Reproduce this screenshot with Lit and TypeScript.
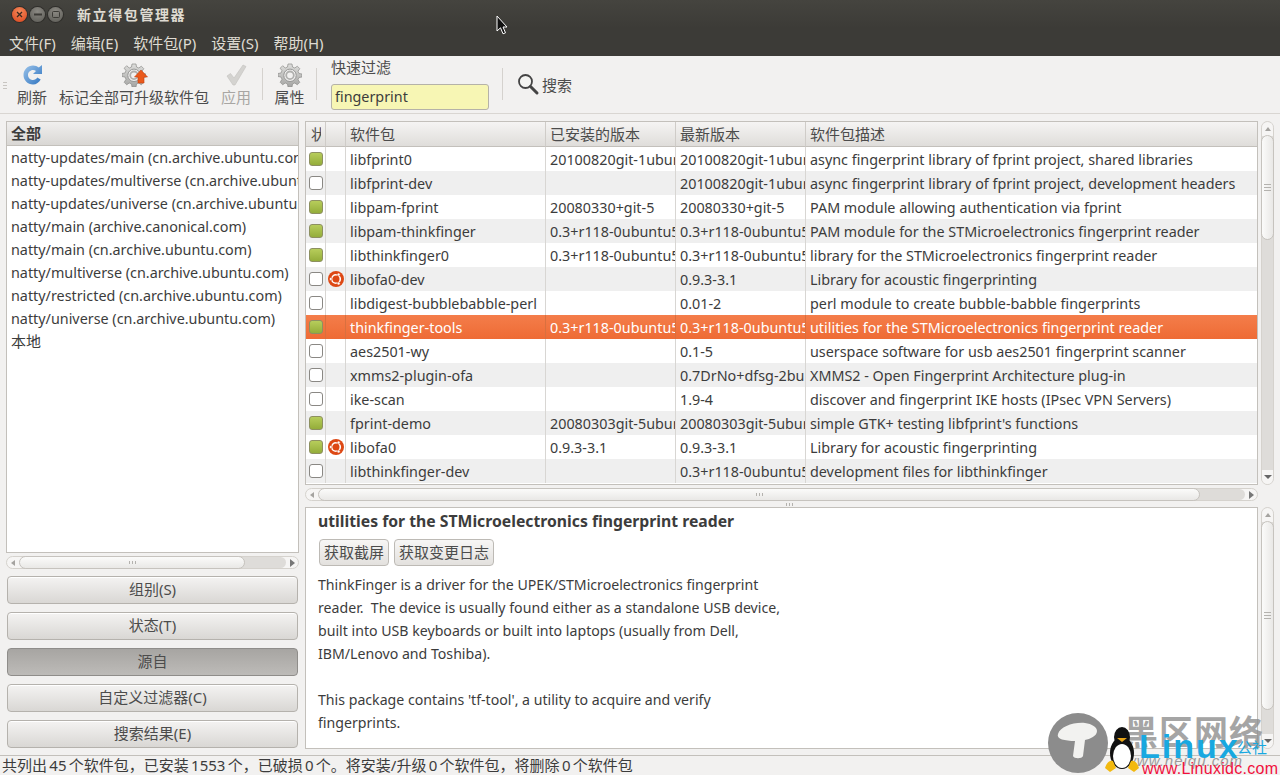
import { LitElement, html, css, svg } from "lit";
import { customElement } from "lit/decorators.js";

type Row = { c: boolean; u?: boolean; n: string; i: string; l: string; d: string; sel?: boolean };
const rows: Row[] = [
  { c: true, n: "libfprint0", i: "20100820git-1ubuntu1", l: "20100820git-1ubuntu1", d: "async fingerprint library of fprint project, shared libraries" },
  { c: false, n: "libfprint-dev", i: "", l: "20100820git-1ubuntu1", d: "async fingerprint library of fprint project, development headers" },
  { c: true, n: "libpam-fprint", i: "20080330+git-5", l: "20080330+git-5", d: "PAM module allowing authentication via fprint" },
  { c: true, n: "libpam-thinkfinger", i: "0.3+r118-0ubuntu5", l: "0.3+r118-0ubuntu5", d: "PAM module for the STMicroelectronics fingerprint reader" },
  { c: true, n: "libthinkfinger0", i: "0.3+r118-0ubuntu5", l: "0.3+r118-0ubuntu5", d: "library for the STMicroelectronics fingerprint reader" },
  { c: false, u: true, n: "libofa0-dev", i: "", l: "0.9.3-3.1", d: "Library for acoustic fingerprinting" },
  { c: false, n: "libdigest-bubblebabble-perl", i: "", l: "0.01-2", d: "perl module to create bubble-babble fingerprints" },
  { c: true, n: "thinkfinger-tools", i: "0.3+r118-0ubuntu5", l: "0.3+r118-0ubuntu5", d: "utilities for the STMicroelectronics fingerprint reader", sel: true },
  { c: false, n: "aes2501-wy", i: "", l: "0.1-5", d: "userspace software for usb aes2501 fingerprint scanner" },
  { c: false, n: "xmms2-plugin-ofa", i: "", l: "0.7DrNo+dfsg-2build1", d: "XMMS2 - Open Fingerprint Architecture plug-in" },
  { c: false, n: "ike-scan", i: "", l: "1.9-4", d: "discover and fingerprint IKE hosts (IPsec VPN Servers)" },
  { c: true, n: "fprint-demo", i: "20080303git-5ubuntu1", l: "20080303git-5ubuntu1", d: "simple GTK+ testing libfprint's functions" },
  { c: true, u: true, n: "libofa0", i: "0.9.3-3.1", l: "0.9.3-3.1", d: "Library for acoustic fingerprinting" },
  { c: false, n: "libthinkfinger-dev", i: "", l: "0.3+r118-0ubuntu5", d: "development files for libthinkfinger" },
];

const origins = [
  "natty-updates/main (cn.archive.ubuntu.com)",
  "natty-updates/multiverse (cn.archive.ubuntu.com)",
  "natty-updates/universe (cn.archive.ubuntu.com)",
  "natty/main (archive.canonical.com)",
  "natty/main (cn.archive.ubuntu.com)",
  "natty/multiverse (cn.archive.ubuntu.com)",
  "natty/restricted (cn.archive.ubuntu.com)",
  "natty/universe (cn.archive.ubuntu.com)",
];

const gear = () => svg`<svg width="24" height="24" viewBox="0 0 24 24">
  <defs><linearGradient id="g" x1="0" y1="0" x2="0" y2="1"><stop offset="0" stop-color="#dededc"/><stop offset="1" stop-color="#a5a5a3"/></linearGradient></defs>
  <g fill="url(#g)" stroke="#8c8c8a" stroke-width=".7">
    <path d="M10 1h4l.5 3 2.300 1 2.500-1.800 2.500 2.500L20 8.200l1 2.300 3 .5v3l-3 .5-1 2.300 1.800 2.500-2.500 2.500-2.500-1.800-2.300 1-.5 3h-4l-.5-3-2.300-1-2.500 1.800-2.500-2.500L4 16.300l-1-2.300-3-.5v-3l3-.5 1-2.300-1.800-2.500 2.500-2.500L7.200 5l2.300-1z"/>
  </g>
  <circle cx="12" cy="12.300" r="6.200" fill="#f2f1f0" stroke="#8f8f8d" stroke-width=".9"/>
  <circle cx="12" cy="12.300" r="3.800" fill="none" stroke="#b0b0ae" stroke-width="1.800"/>
</svg>`;

@customElement("app-root")
export class AppRoot extends LitElement {
  static styles = css`
    :host { display: block; width: 1280px; height: 775px; overflow: hidden; position: relative; font-family: "Noto Sans", "Noto Sans CJK SC", sans-serif; font-size: 14.35px; color: #3c3c3c; background: #f2f1f0; }
    .win { display: flex; flex-direction: column; height: 775px; }
    .zh { font-size: 15px; }
    .title { height: 28px; background: linear-gradient(#45443f, #3c3b37); display: flex; align-items: center; padding-left: 12px; color: #dfdbd2; font-weight: 700; font-size: 14px; flex: none; }
    .wbtns { display: flex; gap: 3px; margin-right: 14px; align-items: center; }
    .wbtn { width: 15px; height: 15px; border-radius: 50%; display: flex; align-items: center; justify-content: center; background: radial-gradient(circle at 50% 30%, #8b8983, #5b5a55); box-shadow: 0 0 0 1px #2f2e2b; }
    .wbtn.close { background: radial-gradient(circle at 50% 30%, #f58a5b, #d9431b); }
    .title span.t { letter-spacing: 1.6px; }
    .menu { height: 28px; background: #3c3b37; display: flex; align-items: center; color: #dfdbd2; padding-left: 9px; gap: 15px; font-size: 15px; flex: none; }
    .toolbar { height: 58px; flex: none; display: flex; background: #f2f1f0; border-bottom: 1px solid #d9d6d2; box-sizing: border-box; padding-left: 3px; }
    .grip { width: 4px; height: 7px; margin-top: 26px; background: repeating-linear-gradient(0deg, #c8c5c1 0 1px, transparent 1px 3px); flex: none; }
    .tool { display: flex; flex-direction: column; align-items: center; padding-top: 6px; gap: 1px; font-size: 15px; line-height: 18px; color: #4c4c4c; height: 50px; box-sizing: border-box; flex: none; }
    .tool .ic { height: 26px; display: flex; align-items: center; justify-content: center; position: relative; }
    .tool .up { position: absolute; left: 11px; top: 7px; }
    .tool.dis { color: #a8a6a3; }
    .tool.refresh { width: 46px; margin-left: 2px; }
    .tool.mark { width: 158px; }
    .tool.apply { width: 46px; }
    .tool.prop { width: 53px; }
    .vsep { width: 1px; height: 32px; background: #d5d2ce; margin-top: 12px; flex: none; }
    .vsep.a { margin-left: 3px; }
    .vsep.b { margin-left: 13px; }
    .filter { display: flex; flex-direction: column; margin-left: 14px; width: 158px; padding-top: 2px; flex: none; }
    .filter label { font-size: 15px; line-height: 18px; color: #4c4c4c; }
    .filter .inp { margin-top: 8px; height: 26px; box-sizing: border-box; width: 158px; border: 1px solid #b5b2a8; border-radius: 3px; background: #f7f6b4; padding-left: 3px; line-height: 24px; color: #3c3c3c; }
    .search { display: flex; align-items: center; gap: 2px; margin-left: 13px; font-size: 15px; color: #4c4c4c; height: 56px; }
    .main { flex: 1; min-height: 0; display: flex; padding: 7px 6px 6px 6px; gap: 6px; }
    .left { width: 293px; flex: none; display: flex; flex-direction: column; }
    .lbox { height: 432px; flex: none; border: 1px solid #c3c0bb; background: #fff; box-sizing: border-box; overflow: hidden; }
    .lhead { height: 24px; box-sizing: border-box; background: linear-gradient(#f0efee, #d9d7d4); border-bottom: 1px solid #c3c0bb; font-weight: 700; font-size: 15px; color: #3c3c3c; padding-left: 4px; line-height: 22px; }
    .lrow { height: 23px; line-height: 23px; padding-left: 4px; white-space: nowrap; color: #3c3c3c; }
    .hs { height: 13px; flex: none; border: 1px solid #d5d2cd; border-radius: 7px; background: #f6f5f4; box-sizing: border-box; position: relative; }
    .hs.lh { margin-top: 3px; }
    .hs .track { position: absolute; top: 0; bottom: 0; background: #dedcd9; border-radius: 0 6px 6px 0; }
    .hs .thumb { position: absolute; top: -1px; bottom: -1px; border: 1px solid #c6c3be; border-radius: 7px; background: linear-gradient(#fbfbfa, #e9e8e6); box-sizing: border-box; display: flex; align-items: center; justify-content: center; }
    .dots { width: 7px; height: 3px; background: repeating-linear-gradient(90deg, #b4b2ae 0 1px, transparent 1px 3px); }
    .arrow { position: absolute; width: 0; height: 0; border-style: solid; }
    .arrow.l { left: 4px; top: 3px; border-width: 3px 4px 3px 0; border-color: transparent #a5a3a0 transparent transparent; }
    .arrow.r { right: 3px; top: 2px; border-width: 4px 0 4px 5px; border-color: transparent transparent transparent #777; }
    .btns { display: flex; flex-direction: column; gap: 8px; margin-top: 7px; padding: 0 1px; }
    .btn { height: 28px; box-sizing: border-box; border: 1px solid #b5b2ad; border-radius: 4px; background: linear-gradient(#f4f3f2, #d9d7d4); box-shadow: inset 0 1px 0 #fff; text-align: center; line-height: 25px; font-size: 15px; color: #4c4c4c; }
    .btn.on { background: linear-gradient(#a7a5a2, #bdbbb8); border-color: #8f8d8a; box-shadow: none; }
    .right { flex: 1; min-width: 0; display: flex; flex-direction: column; }
    .top { display: flex; height: 364px; flex: none; gap: 3px; }
    .tree { flex: 1; min-width: 0; border: 1px solid #c3c0bb; box-sizing: border-box; background: #fff; overflow: hidden; }
    .grid { display: grid; grid-template-columns: 20px 20px 200px 130px 130px 1fr; }
    .row { display: contents; }
    .hd { height: 25px; box-sizing: border-box; background: linear-gradient(#f5f4f3, #dfddda); border-bottom: 1px solid #c3c0bb; border-right: 1px solid #cfccc8; padding-left: 4px; line-height: 25px; font-size: 15px; color: #4c4c4c; overflow: hidden; white-space: nowrap; }
    .hd .clip { display: inline-block; width: 10px; margin-left: 1px; overflow: hidden; vertical-align: top; }
    .cell { height: 24px; line-height: 23px; padding-left: 4px; box-sizing: border-box; border-right: 1px solid #d8d6d3; overflow: hidden; white-space: nowrap; color: #3c3c3c; display: flex; align-items: center; }
    .alt .cell { background: #efefef; }
    .sel .cell { background: linear-gradient(#f47d4a, #ee6b35); color: #fff; border-right-color: #d9703f; }
    .hd.last, .cell.last { border-right: 0; }
    .cb { width: 14px; height: 14px; box-sizing: border-box; border: 1px solid #8a8884; border-radius: 3px; background: #fff; flex: none; }
    .cb.on { background: linear-gradient(#b7cd5b, #94ad3a); border-color: #8d9060; }
    .cell.c1 { padding-left: 3px; }
    .cell.c2 { padding-left: 2px; }
    .vs { width: 13px; flex: none; border: 1px solid #d5d2cd; border-radius: 7px; box-sizing: border-box; background: #dedcd9; position: relative; }
    .vs .thumb { position: absolute; left: -1px; right: -1px; border: 1px solid #c6c3be; border-radius: 7px; background: linear-gradient(90deg, #fbfbfa, #e9e8e6); box-sizing: border-box; display: flex; align-items: center; justify-content: center; }
    .vs .capt { position: absolute; left: 0; right: 0; top: 0; height: 14px; background: #f6f5f4; border-radius: 6px 6px 0 0; }
    .vs .capb { position: absolute; left: 0; right: 0; bottom: 0; height: 14px; background: #f6f5f4; border-radius: 0 0 6px 6px; }
    .hdots { width: 7px; height: 7px; background: repeating-linear-gradient(0deg, #b4b2ae 0 1px, transparent 1px 3px); }
    .arrow.u { left: 3px; top: 5px; border-width: 0 3px 4px 3px; border-color: transparent transparent #a5a3a0 transparent; }
    .arrow.d { left: 2px; bottom: 5px; border-width: 4px 4px 0 4px; border-color: #666 transparent transparent transparent; }
    .hsw { margin-top: 3px; padding-right: 16px; }
    .vgrip { height: 6px; flex: none; display: flex; justify-content: center; align-items: center; }
    .bottom { display: flex; gap: 3px; height: 242px; flex: none; }
    .detail { flex: 1; border: 1px solid #c3c0bb; background: #fff; box-sizing: border-box; padding: 3px 12px; }
    .detail h3 { margin: 0; font-size: 15.75px; font-weight: 700; line-height: 20px; color: #3c3c3c; }
    .dbtns { display: flex; gap: 5px; margin-top: 8px; margin-left: 1px; }
    .dbtn { height: 27px; box-sizing: border-box; padding: 0 4px; border: 1px solid #bdbab5; border-radius: 4px; background: linear-gradient(#f7f6f5, #e3e1de); line-height: 25px; font-size: 15px; color: #4c4c4c; }
    .detail pre { margin: 7px 0 0; font: inherit; font-size: 14.15px; line-height: 23px; color: #3c3c3c; }
    .status { height: 20px; flex: none; box-sizing: border-box; border-top: 1px solid #c3c0bb; padding-left: 2px; line-height: 19px; font-size: 15px; word-spacing: -1.6px; color: #3c3c3c; background: #f2f1f0; white-space: nowrap; }
    .cursor { position: absolute; left: 496px; top: 15px; }
    .wm { position: absolute; left: 1047px; top: 708px; width: 233px; height: 67px; pointer-events: none; overflow: hidden; }
    .wm svg { position: absolute; }
    .wm div { position: absolute; white-space: nowrap; }
    .wm .cn { left: 77px; top: 4px; font: 700 34px/38px "Noto Sans CJK SC", sans-serif; letter-spacing: 1px; color: #8f8f8f; opacity: .8; }
    .wm .h { left: 78px; top: 44px; font: italic 15px/18px "Liberation Sans", sans-serif; color: #777; opacity: .7; letter-spacing: 1px; }
    .wm .lx { left: 92px; top: 19px; font: 700 34px/38px "Liberation Sans", sans-serif; color: #18a8e0; letter-spacing: 2px; }
    .wm .gs { left: 190px; top: 30px; font: 15px/18px "Noto Sans CJK SC", sans-serif; color: #18a8e0; }
    .wm .url { left: 95px; top: 51px; font: 16px/20px "Liberation Sans", sans-serif; color: #f0103c; letter-spacing: .3px; }
  `;

  render() {
    return html`<div class="win">
      <div class="title">
        <div class="wbtns">
          <div class="wbtn close"><svg width="7" height="7" viewBox="0 0 7 7"><path d="M1 1l5 5M6 1L1 6" stroke="#3c2a20" stroke-width="1.3"/></svg></div>
          <div class="wbtn"><svg width="8" height="3" viewBox="0 0 8 3"><rect width="8" height="2" y=".5" fill="#3c3b37"/></svg></div>
          <div class="wbtn"><svg width="8" height="7" viewBox="0 0 8 7"><rect x=".5" y=".5" width="7" height="6" rx="1" fill="none" stroke="#3c3b37"/></svg></div>
        </div>
        <span class="t">新立得包管理器</span>
      </div>
      <div class="menu"><span>文件(F)</span><span>编辑(E)</span><span>软件包(P)</span><span>设置(S)</span><span>帮助(H)</span></div>
      <div class="toolbar">
        <div class="grip"></div>
        <div class="tool refresh"><div class="ic"><svg width="24" height="24" viewBox="0 0 24 24"><defs><linearGradient id="b" x1="0" y1="0" x2="1" y2="1"><stop offset="0" stop-color="#9cc4ea"/><stop offset="1" stop-color="#2f74c0"/></linearGradient></defs><path fill="url(#b)" d="M13 2.500c2.300 0 4.300.8 5.800 2.100L22 2v9h-9l3-3c-.8-.7-1.900-1.100-3-1.100-2.800 0-5 2.300-5 5.100s2.200 5 5 5c1.800 0 3.500-1 4.300-2.500l3.400 2C19.100 19.400 16.300 21.500 13 21.500 7.800 21.500 3.500 17.300 3.500 12S7.800 2.500 13 2.500z"/></svg></div><span>刷新</span></div>
        <div class="tool mark"><div class="ic">${gear()}<svg class="up" width="16" height="16" viewBox="0 0 16 16"><path d="M8 1l6.500 7H11v6H5V8H1.500z" fill="#ea5a1c" stroke="#c8410f" stroke-width=".6"/></svg></div><span>标记全部可升级软件包</span></div>
        <div class="tool dis apply"><div class="ic"><svg width="24" height="24" viewBox="0 0 24 24"><path d="M3 13l3.500-2.500L10 15 19 2l3 1.500L11 22h-2z" fill="#d4d3d0" stroke="#c2c1be" stroke-width=".6"/></svg></div><span>应用</span></div>
        <div class="vsep a"></div>
        <div class="tool prop"><div class="ic">${gear()}</div><span>属性</span></div>
        <div class="vsep"></div>
        <div class="filter"><label>快速过滤</label><div class="inp">fingerprint</div></div>
        <div class="vsep b"></div>
        <div class="search"><svg width="24" height="24" viewBox="0 0 24 24"><circle cx="9.500" cy="9.500" r="6.500" fill="#f4f4f2" stroke="#444" stroke-width="1.800"/><path d="M14.500 14.500L21 21" stroke="#444" stroke-width="3" stroke-linecap="round"/></svg><span>搜索</span></div>
      </div>
      <div class="main">
        <div class="left">
          <div class="lbox"><div class="lhead">全部</div>${origins.map((o) => html`<div class="lrow">${o}</div>`)}<div class="lrow zh">本地</div></div>
          <div class="hs lh"><div class="track" style="left:200px;right:12px"></div><div class="arrow l"></div><div class="thumb" style="left:12px;width:226px"><div class="dots"></div></div><div class="arrow r"></div></div>
          <div class="btns">
            <div class="btn">组别(S)</div><div class="btn">状态(T)</div><div class="btn on">源自</div><div class="btn">自定义过滤器(C)</div><div class="btn">搜索结果(E)</div>
          </div>
        </div>
        <div class="right">
          <div class="top">
            <div class="tree"><div class="grid">
              <div class="hd"><span class="clip">状态</span></div><div class="hd"></div><div class="hd">软件包</div><div class="hd">已安装的版本</div><div class="hd">最新版本</div><div class="hd last">软件包描述</div>
              ${rows.map((r, i) => html`<div class="row ${i % 2 ? "alt" : ""} ${r.sel ? "sel" : ""}">
                <div class="cell c1"><div class="cb ${r.c ? "on" : ""}"></div></div>
                <div class="cell c2">${r.u ? html`<svg width="16" height="16" viewBox="0 0 16 16"><circle cx="8" cy="8" r="8" fill="#dd4814"/><circle cx="8" cy="8" r="4.300" fill="none" stroke="#fff" stroke-width="1.600"/><circle cx="2.800" cy="8" r="1.500" fill="#fff" stroke="#dd4814" stroke-width=".6"/><circle cx="10.600" cy="3.500" r="1.500" fill="#fff" stroke="#dd4814" stroke-width=".6"/><circle cx="10.600" cy="12.500" r="1.500" fill="#fff" stroke="#dd4814" stroke-width=".6"/></svg>` : ""}</div>
                <div class="cell">${r.n}</div><div class="cell">${r.i}</div><div class="cell">${r.l}</div><div class="cell last">${r.d}</div>
              </div>`)}
            </div></div>
            <div class="vs"><div class="capt"></div><div class="capb"></div><div class="arrow u"></div><div class="thumb" style="top:13px;height:105px"><div class="hdots"></div></div><div class="arrow d"></div></div>
          </div>
          <div class="hsw"><div class="hs"><div class="track" style="left:800px;right:12px"></div><div class="arrow l"></div><div class="thumb" style="left:12px;width:882px"><div class="dots"></div></div><div class="arrow r"></div></div></div>
          <div class="vgrip"><div class="dots"></div></div>
          <div class="bottom">
            <div class="detail">
              <h3>utilities for the STMicroelectronics fingerprint reader</h3>
              <div class="dbtns"><div class="dbtn">获取截屏</div><div class="dbtn">获取变更日志</div></div>
              <pre>ThinkFinger is a driver for the UPEK/STMicroelectronics fingerprint
reader.  The device is usually found either as a standalone USB device,
built into USB keyboards or built into laptops (usually from Dell,
IBM/Lenovo and Toshiba).

This package contains 'tf-tool', a utility to acquire and verify
fingerprints.</pre>
            </div>
            <div class="vs"><div class="capt"></div><div class="capb"></div><div class="arrow u"></div><div class="thumb" style="top:13px;height:189px"><div class="hdots"></div></div><div class="arrow d"></div></div>
          </div>
        </div>
      </div>
      <div class="status">共列出 45 个软件包，已安装 1553 个，已破损 0 个。将安装/升级 0 个软件包，将删除 0 个软件包</div>
    </div>
    <svg class="cursor" width="12" height="20" viewBox="0 0 12 20"><path d="M1 1v15l3.500-3.200 2.500 6 2.500-1-2.500-5.800H11z" fill="#111" stroke="#fff" stroke-width="1"/></svg>
    <div class="wm">
      <svg style="left:0;top:0" width="64" height="67" viewBox="0 0 64 67"><circle cx="31" cy="35" r="30" fill="#8c8c8c"/><path d="M11 26c2-7 15-12 27-11 7 1 12 4 12 8 0 5-7 8-12 9l-2 16c-1 3-9 3-10 0l2-15C18 33 9 31 11 26z" fill="#f2f2f0"/></svg>
      <div class="cn">黑区网络</div>
      <div class="h">www.heiqu.com</div>
      <div class="lx">Linux</div><div class="gs">公社</div>
      <svg style="left:58px;top:19px" width="34" height="46" viewBox="0 0 34 46"><ellipse cx="17" cy="26" rx="12" ry="16" fill="#111"/><ellipse cx="17" cy="10" rx="8" ry="10" fill="#111"/><ellipse cx="17" cy="29" rx="9" ry="12" fill="#fff"/><path d="M12 11h10l-5 4z" fill="#e8a416"/><path d="M0 41c2-6 5-8 8-7l3 7-6 4zM34 41c-2-6-5-8-8-7l-3 7 6 4z" fill="#f2b90f"/></svg>
      <div class="url">www.Linuxidc.com</div>
    </div>`;
  }
}
